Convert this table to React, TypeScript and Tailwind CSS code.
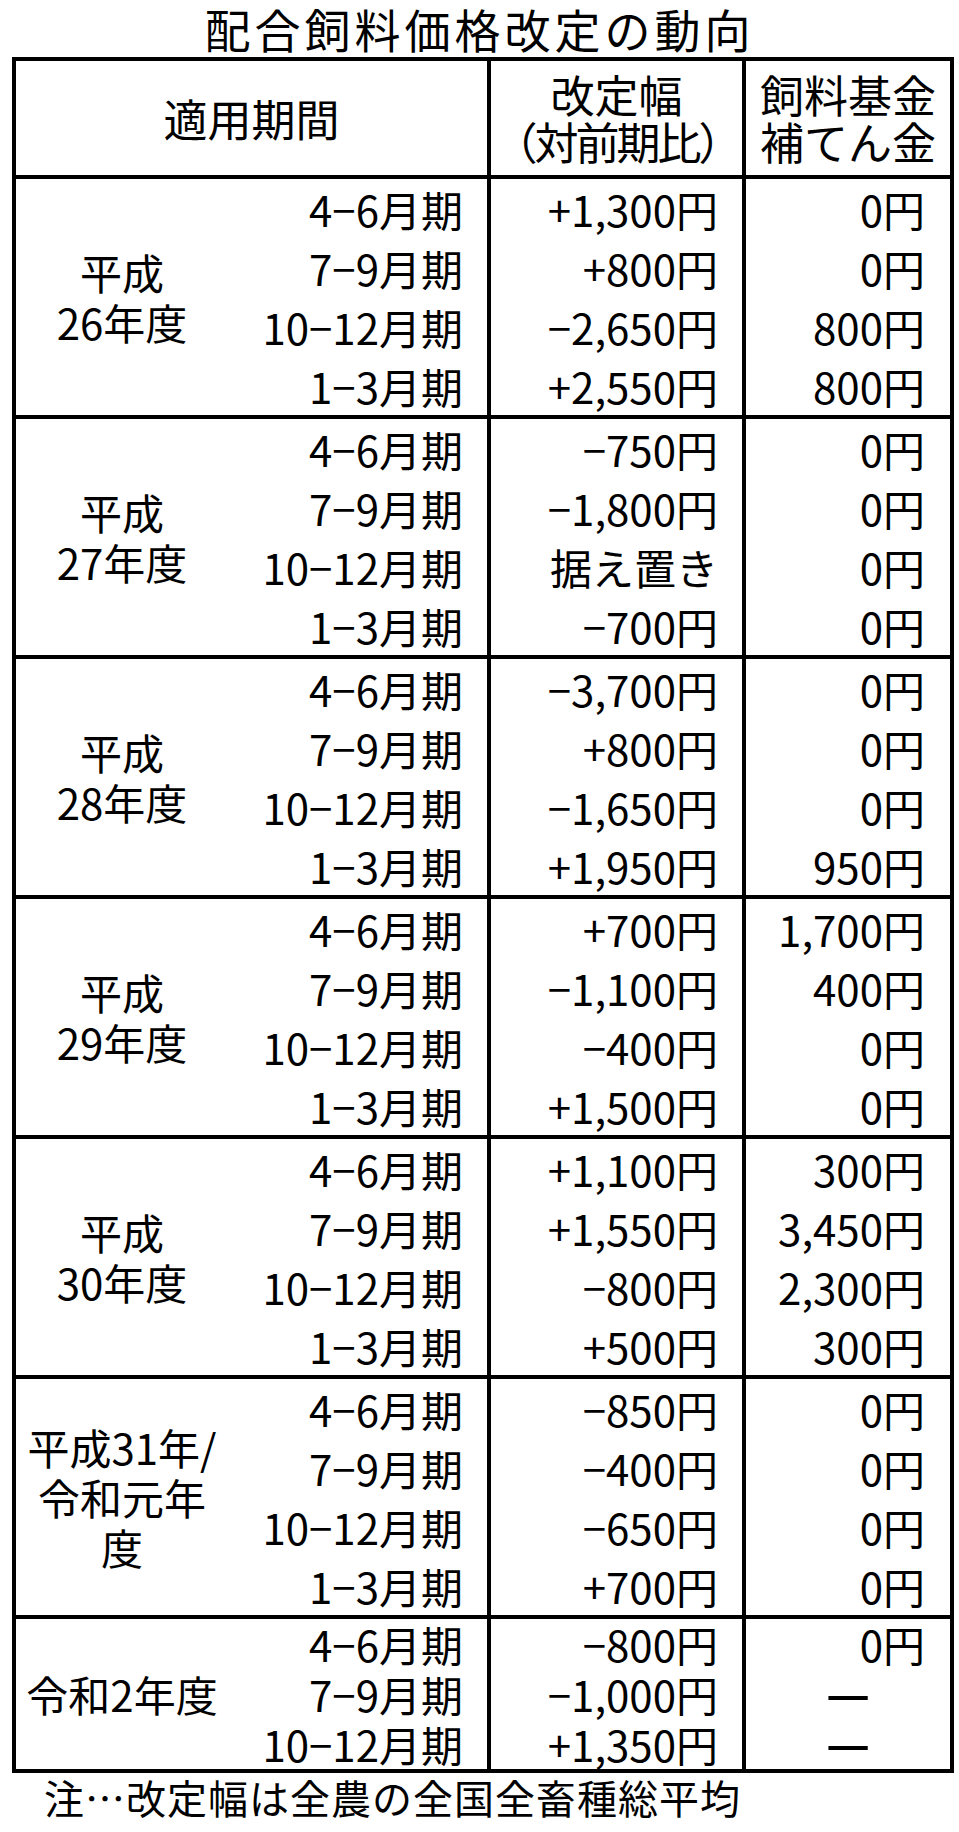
import React from "react";

type Group = {
  label: string[];
  rows: { period: string; change: string; fund: string }[];
  short?: boolean;
};

const groups: Group[] = [
  {
    label: ["平成", "26年度"],
    rows: [
      { period: "4−6月期", change: "+1,300円", fund: "0円" },
      { period: "7−9月期", change: "+800円", fund: "0円" },
      { period: "10−12月期", change: "−2,650円", fund: "800円" },
      { period: "1−3月期", change: "+2,550円", fund: "800円" },
    ],
  },
  {
    label: ["平成", "27年度"],
    rows: [
      { period: "4−6月期", change: "−750円", fund: "0円" },
      { period: "7−9月期", change: "−1,800円", fund: "0円" },
      { period: "10−12月期", change: "据え置き", fund: "0円" },
      { period: "1−3月期", change: "−700円", fund: "0円" },
    ],
  },
  {
    label: ["平成", "28年度"],
    rows: [
      { period: "4−6月期", change: "−3,700円", fund: "0円" },
      { period: "7−9月期", change: "+800円", fund: "0円" },
      { period: "10−12月期", change: "−1,650円", fund: "0円" },
      { period: "1−3月期", change: "+1,950円", fund: "950円" },
    ],
  },
  {
    label: ["平成", "29年度"],
    rows: [
      { period: "4−6月期", change: "+700円", fund: "1,700円" },
      { period: "7−9月期", change: "−1,100円", fund: "400円" },
      { period: "10−12月期", change: "−400円", fund: "0円" },
      { period: "1−3月期", change: "+1,500円", fund: "0円" },
    ],
  },
  {
    label: ["平成", "30年度"],
    rows: [
      { period: "4−6月期", change: "+1,100円", fund: "300円" },
      { period: "7−9月期", change: "+1,550円", fund: "3,450円" },
      { period: "10−12月期", change: "−800円", fund: "2,300円" },
      { period: "1−3月期", change: "+500円", fund: "300円" },
    ],
  },
  {
    label: ["平成31年/", "令和元年", "度"],
    rows: [
      { period: "4−6月期", change: "−850円", fund: "0円" },
      { period: "7−9月期", change: "−400円", fund: "0円" },
      { period: "10−12月期", change: "−650円", fund: "0円" },
      { period: "1−3月期", change: "+700円", fund: "0円" },
    ],
  },
  {
    label: ["令和2年度"],
    short: true,
    rows: [
      { period: "4−6月期", change: "−800円", fund: "0円" },
      { period: "7−9月期", change: "−1,000円", fund: "―" },
      { period: "10−12月期", change: "+1,350円", fund: "―" },
    ],
  },
];

function GroupRows({ group, last }: { group: Group; last: boolean }) {
  const rowClass = group.short ? "h-[50px] leading-[50px]" : "h-[59px] leading-[59px]";
  return (
    <div className={`flex ${last ? "" : "border-b-4 border-black"}`}>
      <div className="w-[475px] border-r-4 border-black flex">
        <div className="w-[212px] flex flex-col items-center justify-center text-center leading-[50px]">
          {group.label.map((l) => (
            <div key={l}>{l}</div>
          ))}
        </div>
        <div className="flex-1 flex flex-col text-right pr-[24px]">
          {group.rows.map((r) => (
            <div key={r.period} className={rowClass}>
              {r.period}
            </div>
          ))}
        </div>
      </div>
      <div className="w-[255px] border-r-4 border-black flex flex-col text-right pr-[24px]">
        {group.rows.map((r) => (
          <div key={r.period} className={rowClass}>
            {r.change}
          </div>
        ))}
      </div>
      <div className="flex-1 flex flex-col text-right pr-[25px]">
        {group.rows.map((r) =>
          r.fund === "―" ? (
            <div key={r.period} className={`${rowClass} text-center pl-[25px] font-bold`}>
              <span className="inline-block scale-y-[2] scale-x-[1.1]">―</span>
            </div>
          ) : (
            <div key={r.period} className={rowClass}>
              {r.fund}
            </div>
          )
        )}
      </div>
    </div>
  );
}

export default function App() {
  return (
    <div className="w-[959px] h-[1832px] bg-white text-black font-['Noto_Sans_CJK_JP','Noto_Sans_CJK_SC',sans-serif]">
      <h1 className="text-center text-[46px] leading-[57px] tracking-[4px] font-normal">
        配合飼料価格改定の動向
      </h1>
      <div className="ml-[12px] w-[942px] border-4 border-black text-[42px]">
        <div className="flex h-[118px] border-b-4 border-black text-[44px]">
          <div className="w-[475px] border-r-4 border-black flex items-center justify-center">
            適用期間
          </div>
          <div className="w-[255px] border-r-4 border-black flex flex-col items-center justify-center leading-[47px]">
            <div>改定幅</div>
            <div className="tracking-[-3px]">（対前期比）</div>
          </div>
          <div className="flex-1 flex flex-col items-center justify-center leading-[47px]">
            <div>飼料基金</div>
            <div>補てん金</div>
          </div>
        </div>
        {groups.map((g, i) => (
          <GroupRows key={i} group={g} last={i === groups.length - 1} />
        ))}
      </div>
      <p className="pl-[44px] text-[40px] leading-[48px] tracking-[1px]">
        注…改定幅は全農の全国全畜種総平均
      </p>
    </div>
  );
}
